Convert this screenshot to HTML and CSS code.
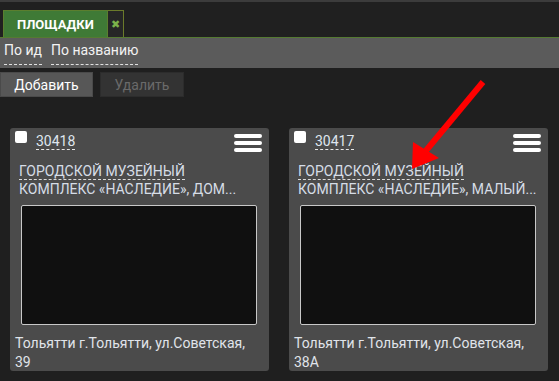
FILE: index.html
```html
<!DOCTYPE html>
<html lang="ru">
<head>
    <meta charset="UTF-8">
    <title>Площадки</title>
    <link rel="stylesheet" href="styles.css">
</head>
<body>
    <header class="tab-bar">
        <div class="tab">ПЛОЩАДКИ</div>
        <div class="tab-close">&#10006;</div>
    </header>

    <nav class="sort-bar">
        <span class="sort-link">По ид</span>
        <span class="sort-link">По названию</span>
    </nav>

    <div class="actions">
        <button class="btn btn-add">Добавить</button>
        <button class="btn btn-delete">Удалить</button>
    </div>

    <div class="cards">
        <div class="card">
            <div class="card-head">
                <span class="check"></span>
                <span class="card-id">30418</span>
                <span class="menu"><i></i><i></i><i></i></span>
            </div>
            <div class="card-title"><span class="dashed">ГОРОДСКОЙ МУЗЕЙНЫЙ</span><br>КОМПЛЕКС «НАСЛЕДИЕ», ДОМ...</div>
            <div class="card-image"></div>
            <div class="card-address">Тольятти г.Тольятти, ул.Советская, 39</div>
        </div>

        <div class="card">
            <div class="card-head">
                <span class="check"></span>
                <span class="card-id">30417</span>
                <span class="menu"><i></i><i></i><i></i></span>
            </div>
            <div class="card-title"><span class="dashed">ГОРОДСКОЙ МУЗЕЙНЫЙ</span><br>КОМПЛЕКС «НАСЛЕДИЕ», МАЛЫЙ...</div>
            <div class="card-image"></div>
            <div class="card-address">Тольятти г.Тольятти, ул.Советская, 38А</div>
        </div>
    </div>

    <!-- стрелка-указатель поверх карточки -->
    <svg class="pointer" width="559" height="381" viewBox="0 0 559 381">
        <line x1="483" y1="82" x2="424" y2="153" stroke="#ff0000" stroke-width="6"/>
        <polygon points="412,169 413,142 439,158" fill="#ff0000"/>
    </svg>
</body>
</html>
```

FILE: styles.css
```css
body {
    margin: 0;
    background-color: #1f1f1f;
    font-family: Roboto, 'Liberation Sans', sans-serif;
    color: #ddd;
    position: relative;
    height: 381px;
    overflow: hidden;
}

.tab-bar {
    display: flex;
    align-items: flex-end;
    height: 35px;
    padding-left: 3px;
    background-color: #202020;
    border-top: 2px solid #3c3c3c;
    border-bottom: 1px solid #557a32;
}

.tab {
    height: 27px;
    line-height: 27px;
    padding: 0 13px;
    background-color: #3f7a36;
    color: #fff;
    font-weight: bold;
    font-size: 13px;
    box-sizing: border-box;
    border: 1px solid #5b7e2e;
    border-bottom: none;
}

.tab-close {
    width: 16px;
    height: 27px;
    line-height: 27px;
    box-sizing: border-box;
    text-align: center;
    background-color: #262626;
    border: 1px solid #6b7a2a;
    border-left: none;
    border-bottom: none;
    color: #7bb24a;
    font-size: 11px;
}

.sort-bar {
    display: flex;
    gap: 9px;
    height: 30px;
    padding-left: 4px;
    background-color: #5b5b5b;
    font-size: 14px;
}

.sort-link {
    color: #f2f2f2;
    margin-top: 4px;
    height: 22px;
    border-bottom: 1px dashed #e0e0e0;
}

.actions {
    display: flex;
    gap: 7px;
    margin-top: 4px;
}

.btn {
    height: 25px;
    border: 1px solid #3a3a3a;
    font-family: inherit;
    font-size: 14px;
    padding: 0;
}

.btn-add {
    width: 93px;
    background-color: #575757;
    color: #fff;
    border-color: #4a4a4a;
}

.btn-delete {
    width: 84px;
    background-color: #333;
    color: #6a6a6a;
    border-color: #2c2c2c;
}

.cards {
    display: flex;
    gap: 20px;
    margin-top: 31px;
    padding-left: 10px;
}

.card {
    width: 259px;
    height: 243px;
    box-sizing: border-box;
    background-color: #4b4b4b;
    border-radius: 3px;
    padding: 3px 12px 0 11px;
}

.card-head {
    display: flex;
    align-items: flex-start;
    height: 29px;
    margin-left: -6px;
}

.check {
    width: 12px;
    height: 12px;
    background: #fff;
    border-radius: 2px;
}

.card-id {
    margin-left: 9px;
    margin-top: 2px;
    font-size: 14px;
    line-height: 16px;
    color: #dfe6ee;
    border-bottom: 1px dashed #e6e6e6;
}

.menu {
    margin-left: auto;
    margin-right: -5px;
    margin-top: 3px;
    display: flex;
    flex-direction: column;
    gap: 3px;
}

.menu i {
    display: block;
    width: 28px;
    height: 4px;
    border-radius: 2px;
    background: #fff;
}

.card-title {
    font-size: 14px;
    line-height: 18px;
    margin-top: 2px;
    color: #d6dde6;
    margin-left: -2px;
    white-space: nowrap;
}

.dashed {
    border-bottom: 1px dashed #dcdcdc;
}

.card-image {
    height: 118px;
    margin-top: 7px;
    background-color: #101010;
    border: 1px solid #c8c8c8;
    border-radius: 2px;
}

.card-address {
    margin-top: 9px;
    margin-left: -6px;
    font-size: 14px;
    line-height: 19px;
    color: #e0e4ea;
}

.pointer {
    position: absolute;
    left: 0;
    top: 0;
    pointer-events: none;
}
```
